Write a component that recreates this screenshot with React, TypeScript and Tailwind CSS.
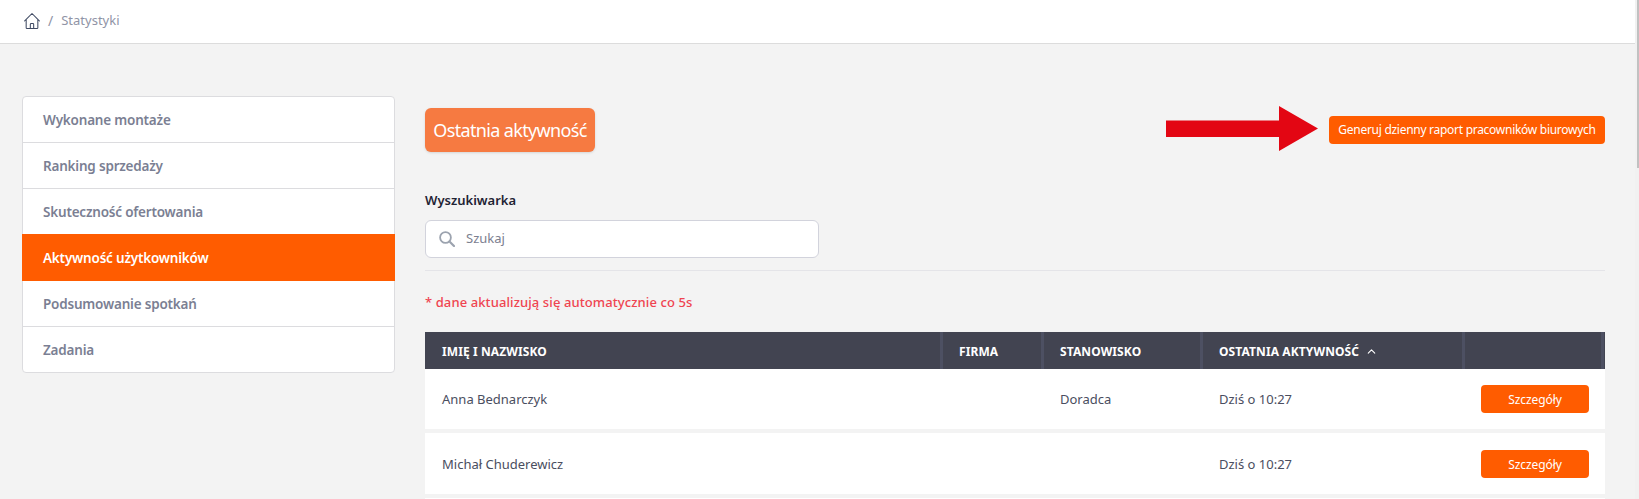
import React from "react";
import { ChevronUp } from "lucide-react";

const tabs = [
  "Wykonane montaże",
  "Ranking sprzedaży",
  "Skuteczność ofertowania",
  "Aktywność użytkowników",
  "Podsumowanie spotkań",
  "Zadania",
];

const rows = [
  { name: "Anna Bednarczyk", job: "Doradca", last: "Dziś o 10:27", h: "h-[60px]" },
  { name: "Michał Chuderewicz", job: "", last: "Dziś o 10:27", h: "h-[61px]" },
  { name: "", job: "", last: "", h: "h-[61px]" },
];

function Sidebar() {
  return (
    <div className="w-[373px] shrink-0 self-start rounded border border-[#dcdcdf] bg-white">
      {tabs.map((t, i) => {
        const active = i === 3;
        return (
          <div
            key={t}
            className={
              active
                ? "-mx-px -mt-px h-[47px] flex items-center pl-[21px] pt-px bg-[#ff5c00] text-white text-[13.5px] font-semibold tracking-[-0.2px]"
                : "h-[46px] last:h-[45px] flex items-center pl-5 pt-0.5 text-[#7b7f93] text-[13.5px] font-semibold tracking-[-0.2px] border-b border-[#dcdcdf] last:border-b-0"
            }
          >
            {t}
          </div>
        );
      })}
    </div>
  );
}

function HomeIcon() {
  return (
    <svg width="20" height="20" viewBox="0 0 24 24" fill="none" stroke="#3f4a63" strokeWidth="1.25" strokeLinecap="round" strokeLinejoin="round">
      <path d="M3 12l2-2m0 0l7-7 7 7M5 10v10a1 1 0 001 1h3m10-11l2 2m-2-2v10a1 1 0 01-1 1h-3m-6 0a1 1 0 001-1v-4a1 1 0 011-1h2a1 1 0 011 1v4a1 1 0 001 1m-6 0h6" />
    </svg>
  );
}

function SearchIcon() {
  return (
    <svg width="16" height="16" viewBox="0 0 16 16" fill="none" stroke="#9ca3af" className="shrink-0">
      <circle cx="6.5" cy="6.5" r="5.4" strokeWidth="1.8" />
      <path d="M10.5 10.5L15 15" strokeWidth="2.2" strokeLinecap="round" />
    </svg>
  );
}

function Arrow() {
  return (
    <svg width="152" height="45" viewBox="0 0 152 45" className="shrink-0">
      <path d="M0 14.5H113V0L152 22.5L113 45V31H0Z" fill="#e30613" />
    </svg>
  );
}

export default function App() {
  return (
    <div className="relative h-[499px] w-full overflow-hidden bg-[#f3f3f3] font-['Noto_Sans',sans-serif]">
      <header className="h-11 bg-white border-b border-[#dcdcdc] flex items-center pl-[22px] pb-px">
        <HomeIcon />
        <span className="ml-[6px] text-sm text-[#9094a6]">/</span>
        <span className="ml-2 text-[13px] text-[#9094a6]">Statystyki</span>
      </header>

      <div className="flex pl-[22px] pt-[52px]">
        <Sidebar />

        <main className="ml-[30px] w-[1180px] pt-3">
          <div className="flex items-start justify-between">
            <h1 className="h-11 w-[170px] rounded-md bg-[#f67a41] text-white text-lg tracking-[-0.65px] flex items-center justify-center shadow-sm">
              Ostatnia aktywność
            </h1>
            <div className="flex items-start -mt-0.5">
              <Arrow />
              <button className="ml-[11px] mt-[10px] h-7 w-[276px] rounded-sm bg-[#ff5c00] text-white text-xs tracking-[-0.28px]">
                Generuj dzienny raport pracowników biurowych
              </button>
            </div>
          </div>

          <label className="block mt-[38px] text-[13px] font-semibold text-[#1f2333] leading-[20px]">Wyszukiwarka</label>
          <div className="mt-[10px] w-[394px] h-[38px] flex items-center rounded-md border border-[#d2d3dc] bg-white pl-[13px]">
            <SearchIcon />
            <span className="ml-[11px] text-[13px] text-[#7c8090]">Szukaj</span>
          </div>
          <div className="mt-3 border-t border-[#e4e4e8]" />

          <p className="mt-[21px] text-[13px] font-medium tracking-[0.1px] text-[#ef4450] leading-5">* dane aktualizują się automatycznie co 5s</p>

          <table className="mt-5 w-full table-fixed border-separate border-spacing-0">
            <thead>
              <tr className="h-[37px] bg-[#424451] text-white text-xs font-bold uppercase text-left tracking-[0.1px]">
                <th className="w-[518px] pl-[17px] pt-0.5 font-bold border-r-[3px] border-[#4d5062]">Imię i nazwisko</th>
                <th className="w-[101px] pl-4 pt-0.5 font-bold border-r-[3px] border-[#4d5062]">Firma</th>
                <th className="w-[159px] pl-4 pt-0.5 font-bold border-r-[3px] border-[#4d5062]">Stanowisko</th>
                <th className="w-[262px] pl-4 pt-0.5 font-bold border-r-[3px] border-[#4d5062]">
                  <span className="inline-flex items-center gap-1.5">
                    Ostatnia aktywność <ChevronUp size={13} strokeWidth={2} />
                  </span>
                </th>
                <th className="p-0">
                  <div className="ml-auto mr-px h-[37px] w-[3px] bg-[#4d5062]" />
                </th>
              </tr>
            </thead>
            <tbody>
              {rows.map((r, i) => (
                <React.Fragment key={i}>
                  <tr className={`${r.h} bg-white text-[13px] text-[#4a4e60]`}>
                    <td className="pl-[17px] pt-0.5">{r.name}</td>
                    <td className="pl-4" />
                    <td className="pl-4 pt-0.5">{r.job}</td>
                    <td className="pl-4 pt-0.5">{r.last}</td>
                    <td className="pr-4 text-right">
                      {r.name && (
                        <button className="h-7 w-[108px] rounded-sm bg-[#ff5c00] pt-0.5 text-white text-xs tracking-[-0.1px]">Szczegóły</button>
                      )}
                    </td>
                  </tr>
                  <tr className="h-1">
                    <td colSpan={5} />
                  </tr>
                </React.Fragment>
              ))}
            </tbody>
          </table>
        </main>
      </div>

      {/* scrollbar */}
      <div className="absolute inset-y-0 right-0 w-1 bg-[#f1f1f1]">
        <div className="ml-auto h-[168px] w-[2px] bg-[#c1c1c1]" />
      </div>
    </div>
  );
}
